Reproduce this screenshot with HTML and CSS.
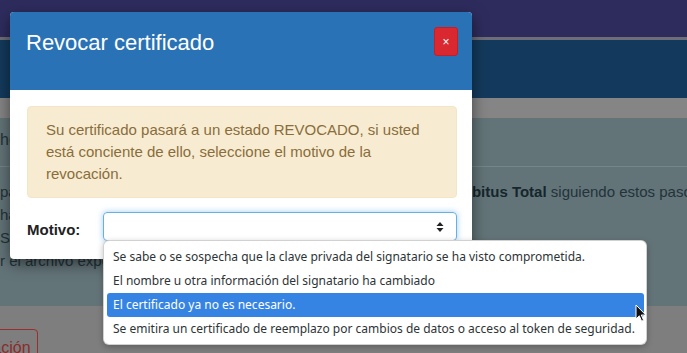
FILE: index.html
```html
<!DOCTYPE html>
<html lang="es">
<head>
    <meta charset="UTF-8">
    <meta name="viewport" content="width=device-width, initial-scale=1.0">
    <title>Revocar certificado</title>
    <link rel="stylesheet" href="styles.css">
</head>
<body>
    <div class="page">
        <div class="navbar"></div>
        <div class="banner"></div>
        <div class="strip"></div>

        <div class="panel">
            <div class="panel-heading">hoja de instrucciones</div>
            <div class="panel-body">
                <p class="line">para descargar su certificado de firma electrónica, ingrese al portal <b>Ambitus Total</b> siguiendo estos pasos:</p>
                <p class="line">haga clic en el botón de descarga del certificado</p>
                <p class="line">Seleccione la carpeta de destino</p>
                <p class="line">r el archivo exportado</p>
            </div>
        </div>

        <div class="actions">
            <button class="btn-outline">Revocación</button>
        </div>
    </div>

    <!-- modal -->
    <div class="modal">
        <div class="modal-header">
            <h2 class="modal-title">Revocar certificado</h2>
            <button class="btn-close">×</button>
        </div>
        <div class="modal-body">
            <div class="alert">
                Su certificado pasará a un estado REVOCADO, si usted está conciente de ello, seleccione el motivo de la revocación.
            </div>
            <div class="form-row">
                <label class="form-label">Motivo:</label>
                <div class="select">
                    <svg class="select-arrows" width="8" height="12" viewBox="0 0 8 12">
                        <path d="M4 1 L7.5 5 H0.5 Z" fill="#222"/>
                        <path d="M4 11 L7.5 7 H0.5 Z" fill="#222"/>
                    </svg>
                </div>
            </div>
        </div>
    </div>

    <!-- open select list -->
    <ul class="dropdown">
        <li class="option">Se sabe o se sospecha que la clave privada del signatario se ha visto comprometida.</li>
        <li class="option">El nombre u otra información del signatario ha cambiado</li>
        <li class="option selected">El certificado ya no es necesario.</li>
        <li class="option">Se emitira un certificado de reemplazo por cambios de datos o acceso al token de seguridad.</li>
    </ul>

    <svg class="cursor" width="12" height="19" viewBox="0 0 12 19">
        <path d="M1 1 L1 15 L4.3 11.8 L6.6 17.2 L8.6 16.3 L6.3 11 L10.8 11 Z" fill="#111" stroke="#fff" stroke-width="1"/>
    </svg>
</body>
</html>
```

FILE: styles.css
```css
body {
    margin: 0;
    font-family: "Liberation Sans", Arial, sans-serif;
    background-color: #7e7e7e;
    overflow: hidden;
}

.page {
    height: 353px;
}

.navbar {
    height: 37px;
    background: #2e2c5d;
    border-bottom: 3px solid #6e6e78;
}

.banner {
    height: 58px;
    background: #133a5c;
}

.strip {
    height: 20px;
    background: #858585;
}

.panel {
    height: 188px;
    background: #637478;
    color: #22333a;
    white-space: nowrap;
    overflow: hidden;
}

.panel-heading {
    height: 37px;
    padding-top: 11px;
    line-height: 22px;
    font-size: 16px;
    border-bottom: 1px solid #74868b;
}

.panel-body {
    padding-top: 13px;
    font-size: 15px;
}

.line {
    margin: 0;
    line-height: 23px;
}

.line b {
    color: #15262c;
}

.actions {
    padding-top: 23px;
}

.btn-outline {
    margin-left: -60px;
    padding: 8px 6px;
    font-family: inherit;
    font-size: 16px;
    line-height: 20px;
    color: #8a2c2c;
    background: transparent;
    border: 1px solid #9a2e2e;
    border-radius: 4px;
}

/* modal */
.modal {
    position: absolute;
    left: 10px;
    top: 12px;
    width: 462px;
    background: white;
    border-radius: 4px;
    box-shadow: 0 5px 15px rgba(0, 0, 0, 0.5);
    overflow: hidden;
}

.modal-header {
    display: flex;
    justify-content: space-between;
    align-items: flex-start;
    height: 78px;
    box-sizing: border-box;
    padding: 15px 14px 0 16px;
    background: #2a72b6;
}

.modal-title {
    margin: 1px 0 0;
    font-size: 22px;
    font-weight: normal;
    line-height: 30px;
    color: white;
}

.btn-close {
    width: 24px;
    height: 29px;
    padding: 0;
    font-family: inherit;
    font-size: 12px;
    color: white;
    background: #d9282f;
    border: 1px solid #c21f26;
    border-radius: 3px;
}

.modal-body {
    padding: 16px 15px 18px 17px;
}

.alert {
    padding: 12px 18px;
    font-size: 15px;
    line-height: 22px;
    color: #8a6d3b;
    background: #f7ecd2;
    border: 1px solid #f3e6c6;
    border-radius: 4px;
}

.form-row {
    display: flex;
    align-items: center;
    margin-top: 14px;
}

.form-label {
    width: 76px;
    padding-top: 6px;
    font-size: 15px;
    font-weight: bold;
    color: #222;
}

.select {
    display: flex;
    align-items: center;
    justify-content: flex-end;
    width: 355px;
    height: 29px;
    box-sizing: border-box;
    padding-right: 12px;
    border: 1px solid #66afe9;
    border-radius: 4px;
    box-shadow: 0 0 6px rgba(102, 175, 233, 0.6);
}

/* open select list */
.dropdown {
    position: absolute;
    left: 103px;
    top: 240px;
    width: 544px;
    box-sizing: border-box;
    margin: 0;
    padding: 4px 2px 3px 3px;
    list-style: none;
    background: white;
    border: 1px solid rgba(0, 0, 0, 0.18);
    border-radius: 6px;
    box-shadow: 0 2px 6px rgba(0, 0, 0, 0.25);
    font-family: "Noto Sans", sans-serif;
    font-size: 12px;
    color: #2e3436;
}

.option {
    height: 24px;
    line-height: 24px;
    padding-left: 6px;
    border-radius: 3px;
    white-space: nowrap;
}

.option.selected {
    background: #3584e4;
    color: white;
}

.cursor {
    position: absolute;
    left: 635px;
    top: 304px;
}
```
